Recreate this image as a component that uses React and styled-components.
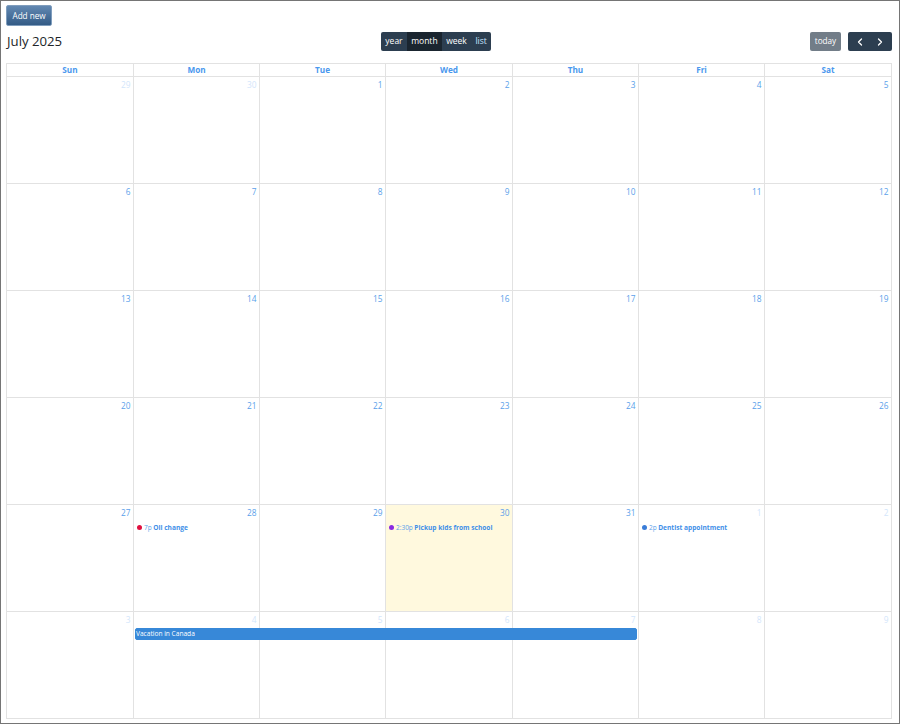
import React from "react";
import styled, { createGlobalStyle } from "styled-components";
import { ChevronLeft, ChevronRight } from "lucide-react";

const Global = createGlobalStyle`
  html, body { margin: 0; padding: 0; background: #fff; }
  * { box-sizing: border-box; }
`;

const COLUMNS = "127px 126px 126px 127px 126px 126px 127px";

const Frame = styled.div`
  width: 900px;
  height: 724px;
  border: 1px solid #757575;
  padding: 4px 7px 0 5px;
  font-family: "Open Sans", "Liberation Sans", sans-serif;
  background: #fff;
  overflow: hidden;
`;

const AddButton = styled.button`
  display: block;
  width: 46px;
  height: 21px;
  padding: 0;
  font: 400 8.2px/19px "Open Sans", sans-serif;
  letter-spacing: -0.05px;
  color: #fff;
  background: linear-gradient(#6288b2, #335b86);
  border: 1px solid #7f9dbd;
  border-radius: 2px;
`;

const Toolbar = styled.div`
  display: flex;
  justify-content: space-between;
  align-items: center;
  height: 19px;
  margin-top: 6px;
`;

const Title = styled.h2`
  margin: 0;
  padding-left: 1px;
  font: 400 13.2px/19px "Open Sans", sans-serif;
  color: #212529;
`;

const ViewGroup = styled.div`
  display: flex;
  height: 19px;
  border-radius: 2px;
  overflow: hidden;
  background: #2c3e50;
`;

const ViewButton = styled.span`
  display: block;
  padding: 0 4.3px;
  font: 400 8.5px/18px "Open Sans", sans-serif;
  color: ${(p) => (p.$accent ? "#c8e4ff" : "#fff")};
  background: ${(p) => (p.$active ? "#1a252f" : "transparent")};
`;

const RightTools = styled.div`
  display: flex;
  gap: 7px;
`;

const TodayButton = styled.span`
  display: block;
  width: 31px;
  height: 19px;
  font: 400 8.2px/18px "Open Sans", sans-serif;
  letter-spacing: -0.05px;
  text-align: center;
  color: #fff;
  background: #727d88;
  border-radius: 2px;
`;

const NavGroup = styled.div`
  display: flex;
  width: 44px;
  height: 19px;
  background: #2c3e50;
  border-radius: 2px;
  color: #fff;
  align-items: center;
  justify-content: space-around;
  padding: 0 2px;
`;

const Calendar = styled.div`
  margin-top: 12px;
  width: 886px;
  border-left: 1px solid #e2e2e2;
  border-top: 1px solid #e2e2e2;
`;

const HeadRow = styled.div`
  display: grid;
  grid-template-columns: ${COLUMNS};
  height: 13px;
`;

const HeadCell = styled.div`
  border-right: 1px solid #e2e2e2;
  border-bottom: 1px solid #e2e2e2;
  font: 700 8.2px/12px "Open Sans", sans-serif;
  color: #4a98ee;
  text-align: center;
`;

const Week = styled.div`
  display: grid;
  grid-template-columns: ${COLUMNS};
  grid-template-rows: 16px 1fr;
  height: 107px;
`;

const Day = styled.div`
  grid-row: 1 / 3;
  grid-column: ${(p) => p.$col};
  border-right: 1px solid #e2e2e2;
  border-bottom: 1px solid #e2e2e2;
  background: ${(p) => (p.$today ? "#fff9de" : "transparent")};
  padding: 1px 2.5px 0 3px;
  min-width: 0;
`;

const DayNum = styled.div`
  font: 400 8.3px/14px "Open Sans", sans-serif;
  text-align: right;
  color: ${(p) => (p.$muted ? "#d3e6fb" : "#5a9fea")};
`;

const EventLine = styled.div`
  display: flex;
  align-items: center;
  margin-top: 1.5px;
  font: 400 6.5px/12px "Open Sans", sans-serif;
  color: #5a9fea;
  white-space: nowrap;
`;

const Dot = styled.span`
  width: 5px;
  height: 5px;
  border-radius: 50%;
  background: ${(p) => p.$c};
  margin-right: 2px;
  flex: none;
`;

const EventTitle = styled.b`
  font: 700 6.6px/12px "Open Sans", sans-serif;
  margin-left: 1.5px;
  color: #3f90e8;
`;

const Bar = styled.div`
  grid-row: 2;
  grid-column: 2 / 6;
  z-index: 1;
  align-self: start;
  height: 12px;
  margin: 0 2px 0 1px;
  background: #3788d8;
  border: 1px solid #3788d8;
  border-radius: 2px;
  font: 400 6.6px/10px "Open Sans", sans-serif;
  color: #fff;
`;

const heads = ["Sun", "Mon", "Tue", "Wed", "Thu", "Fri", "Sat"];
const weeks = [
  [29, 30, 1, 2, 3, 4, 5],
  [6, 7, 8, 9, 10, 11, 12],
  [13, 14, 15, 16, 17, 18, 19],
  [20, 21, 22, 23, 24, 25, 26],
  [27, 28, 29, 30, 31, 1, 2],
  [3, 4, 5, 6, 7, 8, 9],
];

const isMuted = (w, d) => (w === 0 && d < 2) || (w === 4 && d > 4) || w === 5;

const events = {
  "4-1": { c: "#e0103f", t: "7p", n: "Oil change" },
  "4-3": { c: "#8a2be2", t: "2:30p", n: "Pickup kids from school" },
  "4-5": { c: "#3b7dd8", t: "2p", n: "Dentist appointment" },
};

export default function App() {
  return (
    <Frame>
      <Global />
      <AddButton>Add new</AddButton>
      <Toolbar>
        <Title>July 2025</Title>
        <ViewGroup>
          <ViewButton>year</ViewButton>
          <ViewButton $active>month</ViewButton>
          <ViewButton>week</ViewButton>
          <ViewButton $accent>list</ViewButton>
        </ViewGroup>
        <RightTools>
          <TodayButton>today</TodayButton>
          <NavGroup>
            <ChevronLeft size={12} strokeWidth={2.5} />
            <ChevronRight size={12} strokeWidth={2.5} />
          </NavGroup>
        </RightTools>
      </Toolbar>
      <Calendar>
        <HeadRow>
          {heads.map((h) => (
            <HeadCell key={h}>{h}</HeadCell>
          ))}
        </HeadRow>
        {weeks.map((days, w) => (
          <Week key={w}>
            {days.map((d, i) => {
              const ev = events[`${w}-${i}`];
              return (
                <Day key={i} $col={i + 1} $today={w === 4 && i === 3}>
                  <DayNum $muted={isMuted(w, i)}>{d}</DayNum>
                  {ev && (
                    <EventLine>
                      <Dot $c={ev.c} />
                      {ev.t}
                      <EventTitle>{ev.n}</EventTitle>
                    </EventLine>
                  )}
                </Day>
              );
            })}
            {w === 5 && <Bar>Vacation in Canada</Bar>}
          </Week>
        ))}
      </Calendar>
    </Frame>
  );
}
